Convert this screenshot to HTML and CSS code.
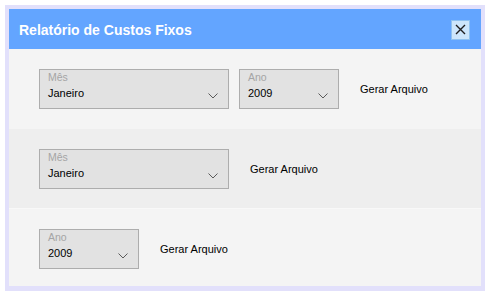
FILE: index.html
```html
<!DOCTYPE html>
<html lang="pt">
<head>
<meta charset="utf-8">
<title>Relatório de Custos Fixos</title>
<link rel="stylesheet" href="styles.css">
</head>
<body>
<div class="dialog">
  <div class="header">
    <span class="title">Relatório de Custos Fixos</span>
    <button class="close" aria-label="Fechar">
      <svg width="11" height="11" viewBox="0 0 11 11"><path d="M1 1L10 10M10 1L1 10" stroke="#1e1e1e" stroke-width="1.4" fill="none"/></svg>
    </button>
  </div>
  <div class="row row-a">
    <div class="combo wide">
      <span class="lbl">Mês</span>
      <span class="val">Janeiro</span>
      <svg class="chev" width="10" height="6" viewBox="0 0 10 6"><path d="M0.5 0.5L5 5L9.5 0.5" stroke="#5a5a5a" stroke-width="1" fill="none"/></svg>
    </div>
    <div class="combo narrow">
      <span class="lbl">Ano</span>
      <span class="val">2009</span>
      <svg class="chev" width="10" height="6" viewBox="0 0 10 6"><path d="M0.5 0.5L5 5L9.5 0.5" stroke="#5a5a5a" stroke-width="1" fill="none"/></svg>
    </div>
    <span class="action">Gerar Arquivo</span>
  </div>
  <div class="row row-b">
    <div class="combo wide">
      <span class="lbl">Mês</span>
      <span class="val">Janeiro</span>
      <svg class="chev" width="10" height="6" viewBox="0 0 10 6"><path d="M0.5 0.5L5 5L9.5 0.5" stroke="#5a5a5a" stroke-width="1" fill="none"/></svg>
    </div>
    <span class="action">Gerar Arquivo</span>
  </div>
  <div class="row row-c">
    <div class="combo narrow">
      <span class="lbl">Ano</span>
      <span class="val">2009</span>
      <svg class="chev" width="10" height="6" viewBox="0 0 10 6"><path d="M0.5 0.5L5 5L9.5 0.5" stroke="#5a5a5a" stroke-width="1" fill="none"/></svg>
    </div>
    <span class="action">Gerar Arquivo</span>
  </div>
</div>
</body>
</html>
```
FILE: styles.css
```css
html, body {
  margin: 0;
  padding: 0;
  background: #ffffff;
}
body {
  padding: 5px;
  font-family: "Liberation Sans", Arial, sans-serif;
}
.dialog {
  width: 472px;
  height: 277px;
  border: 4px solid #e2e0fb;
  border-bottom-width: 5px;
  overflow: hidden;
  display: flex;
  flex-direction: column;
}
.header {
  height: 40px;
  flex: none;
  background: #63a5ff;
  display: flex;
  align-items: center;
  justify-content: space-between;
  padding: 0 11px 0 10px;
}
.title {
  color: #ffffff;
  font-weight: bold;
  font-size: 14px;
  padding-top: 1px;
}
.close {
  width: 19px;
  height: 20px;
  padding: 0;
  margin: 0;
  margin-top: 1px;
  border: 1px solid #8fc2f0;
  background: #cce6fb;
  display: flex;
  align-items: center;
  justify-content: center;
}
.row {
  flex: none;
  display: flex;
  align-items: center;
  padding-left: 30px;
  height: 40px;
  padding-top: 20px;
  padding-bottom: 20px;
}
.row-a { background: #f4f4f4; }
.row-b { background: #eeeeee; }
.row-c { background: #f4f4f4; border-top: 1px solid #f8f8f8; margin-top: -1px; }
.combo {
  position: relative;
  box-sizing: border-box;
  height: 40px;
  background: #e2e2e2;
  border: 1px solid #adadad;
  display: flex;
  flex-direction: column;
  padding: 1px 0 0 8px;
}
.combo.wide { width: 190px; }
.combo.narrow { width: 100px; }
.lbl {
  font-size: 10.5px;
  line-height: 12px;
  color: #a5a5a5;
}
.val {
  font-size: 11px;
  line-height: 16px;
  margin-top: 2px;
  color: #000000;
}
.chev {
  position: absolute;
  right: 10px;
  top: 23px;
}
.combo + .combo { margin-left: 10px; }
.action {
  margin-left: 21px;
  font-size: 11px;
  color: #000000;
  margin-top: -1px;
}
```
